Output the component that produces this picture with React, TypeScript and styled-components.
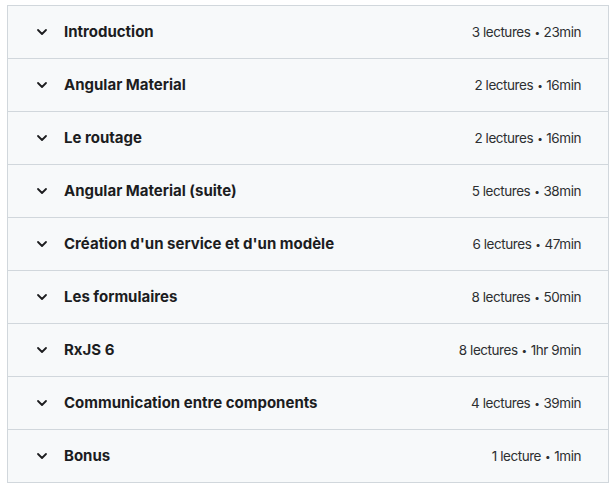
import React from "react";
import styled, { createGlobalStyle } from "styled-components";

const GlobalStyle = createGlobalStyle`
  html, body {
    margin: 0;
    padding: 0;
    background: #ffffff;
  }
  body {
    font-family: Inter, "Liberation Sans", Arial, sans-serif;
    color: #1c1d1f;
  }
`;

const Page = styled.div`
  padding: 5px 6px 6px 7px;
`;

const Curriculum = styled.div`
  border: 1px solid #d1d7dc;
  border-bottom: none;
  width: 600px;
`;

const Section = styled.div`
  display: flex;
  align-items: center;
  box-sizing: border-box;
  height: 53px;
  padding: 0 27px 1px 28px;
  background: #f7f9fa;
  border-bottom: 1px solid #d1d7dc;
  cursor: pointer;
`;

const Chevron = styled.span`
  display: flex;
  align-items: center;
  width: 12px;
  margin-right: 16px;
  color: #1c1d1f;
`;

const Title = styled.span`
  flex: 1;
  font-size: 15px;
  font-weight: 700;
  color: #1c1d1f;
  white-space: nowrap;
`;

const Meta = styled.span`
  display: flex;
  align-items: center;
  font-size: 13.5px;
  letter-spacing: -0.45px;
  color: #2d2f31;
  white-space: nowrap;
`;

const Dot = styled.span`
  font-size: 10px;
  margin: 0 4px;
`;

type SectionData = { title: string; lectures: number; duration: string };

const sections: SectionData[] = [
  { title: "Introduction", lectures: 3, duration: "23min" },
  { title: "Angular Material", lectures: 2, duration: "16min" },
  { title: "Le routage", lectures: 2, duration: "16min" },
  { title: "Angular Material (suite)", lectures: 5, duration: "38min" },
  { title: "Création d'un service et d'un modèle", lectures: 6, duration: "47min" },
  { title: "Les formulaires", lectures: 8, duration: "50min" },
  { title: "RxJS 6", lectures: 8, duration: "1hr 9min" },
  { title: "Communication entre components", lectures: 4, duration: "39min" },
  { title: "Bonus", lectures: 1, duration: "1min" },
];

const ChevronIcon = () => (
  <svg width="12" height="8" viewBox="0 0 12 8" fill="none">
    <path
      d="M2 2l4 4 4-4"
      stroke="currentColor"
      strokeWidth="1.8"
      strokeLinecap="round"
      strokeLinejoin="round"
    />
  </svg>
);

const App: React.FC = () => {
  return (
    <>
      <GlobalStyle />
      <Page>
        <Curriculum>
          {sections.map((s) => (
            <Section key={s.title}>
              <Chevron>
                <ChevronIcon />
              </Chevron>
              <Title>{s.title}</Title>
              <Meta>
                {s.lectures} {s.lectures > 1 ? "lectures" : "lecture"}
                <Dot>•</Dot>
                {s.duration}
              </Meta>
            </Section>
          ))}
        </Curriculum>
      </Page>
    </>
  );
};

export default App;
